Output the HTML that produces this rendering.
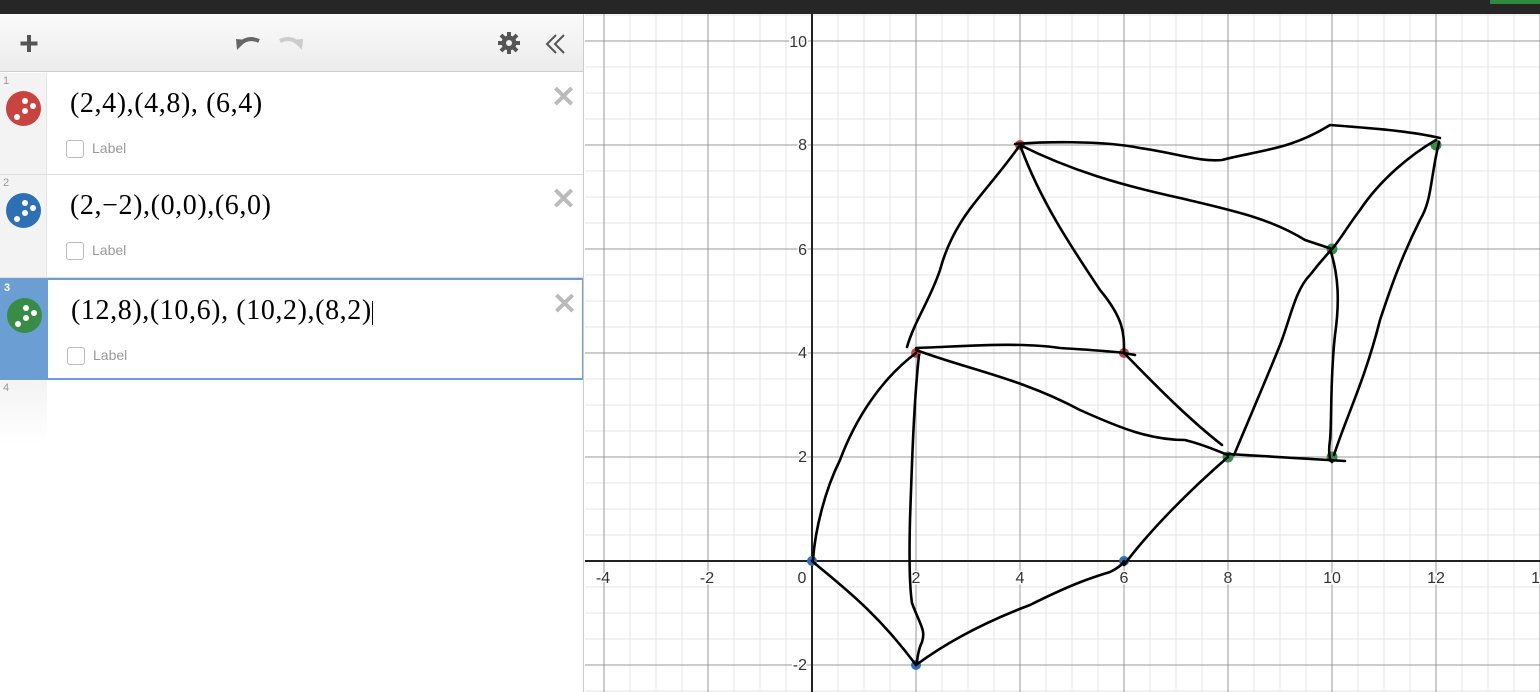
<!DOCTYPE html>
<html><head><meta charset="utf-8"><style>
*{margin:0;padding:0;box-sizing:border-box}
body{width:1540px;height:692px;overflow:hidden;background:#fff;font-family:"Liberation Sans",sans-serif;position:relative}
.top{position:absolute;left:0;top:0;width:1540px;height:14px;background:#262626}
.panel{position:absolute;left:0;top:14px;width:584px;height:678px;background:#fff;border-right:1px solid #ccc}
.tool{position:absolute;left:0;top:0;width:583px;height:58px;background:linear-gradient(#fafafa,#ececec);border-bottom:1px solid #ccc}
.row{position:absolute;left:0;width:583px;border-bottom:1px solid #ddd;background:#fff}
.gut{position:absolute;left:0;top:0;width:47px;height:100%;background:#f3f3f3;border-right:1px solid #e4e4e4}
.num{position:absolute;left:3px;top:2px;font-size:11px;color:#999}
.dot{position:absolute;left:6px;top:18px;width:35px;height:35px;border-radius:50%}
.dot i{position:absolute;width:6px;height:6px;border-radius:50%;background:#fff}
.math{position:absolute;left:70px;top:15px;font-family:"Liberation Serif",serif;font-size:28px;letter-spacing:0.6px;color:#000;white-space:nowrap}
.lab{position:absolute;left:66px;top:67px;font-size:14px;color:#999}
.lab b{display:inline-block;width:18px;height:18px;border:1px solid #bbb;border-radius:3px;vertical-align:middle;margin-right:8px;font-weight:normal}
.x{position:absolute;left:551px;top:10px;font-size:30px;color:#bbb;font-weight:bold;line-height:1}
.graph{position:absolute;left:585px;top:14px}
</style></head><body>
<div class="top"></div>
<div style="position:absolute;left:1490px;top:0;width:50px;height:4px;background:#2e8b3e"></div>
<div class="panel">
 <div class="tool">
  <svg width="583" height="58" style="position:absolute;left:0;top:0">
   <path d="M29 21v17M20.5 29.5h17" stroke="#555" stroke-width="4"/>
   <path d="M237 36 L236 25 L247 26 Z" fill="#666"/><path d="M240 30 Q248 22 259 27" stroke="#666" stroke-width="4" fill="none"/>
   <path d="M302 36 L303 25 L292 26 Z" fill="#ccc"/><path d="M299 30 Q291 22 280 27" stroke="#ccc" stroke-width="4" fill="none"/>
   <g transform="translate(509,29)" fill="#555"><circle r="7.5"/><g stroke="#555" stroke-width="4"><path d="M0 -11V11M-11 0H11M-8 -8L8 8M-8 8L8 -8"/></g><circle r="3" fill="#f0f0f0"/></g>
   <path d="M556 21 L547 30 L556 39 M564 21 L555 30 L564 39" stroke="#555" stroke-width="2" fill="none"/>
  </svg>
 </div>
 <div class="row" style="top:59px;height:102px"><div class="gut"><span class="num">1</span><div class="dot" style="background:#c74440"><i style="left:16px;top:7px"></i><i style="left:24px;top:12px"></i><i style="left:16px;top:17px"></i><i style="left:8px;top:23px"></i></div></div><div class="math">(2,4),(4,8), (6,4)</div><div class="lab"><b></b>Label</div><div class="x">✕</div></div>
 <div class="row" style="top:161px;height:103px"><div class="gut"><span class="num">2</span><div class="dot" style="background:#2d70b3"><i style="left:16px;top:7px"></i><i style="left:24px;top:12px"></i><i style="left:16px;top:17px"></i><i style="left:8px;top:23px"></i></div></div><div class="math">(2,−2),(0,0),(6,0)</div><div class="lab"><b></b>Label</div><div class="x">✕</div></div>
 <div class="row" style="top:264px;height:102px;border:1px solid #6b9ed2;border-top:2px solid #6b9ed2;border-bottom:2px solid #6b9ed2"><div class="gut" style="background:#6b9ed2;border:none;width:47px"><span class="num" style="color:#fff;font-weight:bold">3</span><div class="dot" style="background:#388c46"><i style="left:16px;top:7px"></i><i style="left:24px;top:12px"></i><i style="left:16px;top:17px"></i><i style="left:8px;top:23px"></i></div></div><div class="math">(12,8),(10,6), (10,2),(8,2)<span style="display:inline-block;width:1px;height:24px;background:#000;vertical-align:middle"></span></div><div class="lab"><b></b>Label</div><div class="x">✕</div></div>
 <div style="position:absolute;left:0;top:366px;width:47px;height:64px;background:linear-gradient(#f3f3f3,#fff)"><span class="num">4</span></div>
</div>
<svg class="graph" width="955" height="678" viewBox="585 14 955 678">
 <g id="minor" stroke="#e6e6e6" stroke-width="1"></g>
 <g id="major" stroke="#999" stroke-width="1"></g>
 <path d="M812 14V692M585 561H1540" stroke="#222" stroke-width="2"/>
 <g font-size="16" fill="#333" font-family="Liberation Sans,sans-serif" stroke="#fff" stroke-width="3" paint-order="stroke">
  <text x="603" y="583" text-anchor="middle">-4</text><text x="707" y="583" text-anchor="middle">-2</text><text x="802" y="583" text-anchor="middle">0</text>
  <text x="916" y="583" text-anchor="middle">2</text><text x="1020" y="583" text-anchor="middle">4</text><text x="1124" y="583" text-anchor="middle">6</text>
  <text x="1228" y="583" text-anchor="middle">8</text><text x="1332" y="583" text-anchor="middle">10</text><text x="1436" y="583" text-anchor="middle">12</text><text x="1540" y="583" text-anchor="middle">14</text>
  <text x="807" y="47" text-anchor="end">10</text><text x="807" y="150" text-anchor="end">8</text><text x="807" y="255" text-anchor="end">6</text>
  <text x="807" y="358" text-anchor="end">4</text><text x="807" y="462" text-anchor="end">2</text><text x="807" y="670" text-anchor="end">-2</text>
 </g>
 <g fill="#c74440"><circle cx="916" cy="353" r="5"/><circle cx="1020" cy="145" r="5"/><circle cx="1124" cy="353" r="5"/></g>
 <g fill="#2d70b3"><circle cx="916" cy="665" r="5"/><circle cx="812" cy="561" r="5"/><circle cx="1124" cy="561" r="5"/></g>
 <g fill="#388c46"><circle cx="1436" cy="145" r="5.5"/><circle cx="1332" cy="249" r="5.5"/><circle cx="1332" cy="457" r="5.5"/><circle cx="1228" cy="457" r="5.5"/></g>
 <g stroke="#000" stroke-width="2.6" fill="none" stroke-linejoin="round" stroke-linecap="round">
  <path d="M907 347 C915 320 930 300 940 270 C955 215 985 195 1020 145"/>
  <path d="M1015 144 C1040 142 1100 140 1140 148 C1180 154 1200 162 1222 160 C1260 150 1290 150 1330 125 C1370 128 1410 131 1440 138"/>
  <path d="M1020 145 C1070 170 1120 185 1180 198 C1230 210 1270 218 1305 240 L1332 249"/>
  <path d="M1020 145 C1040 200 1070 245 1100 290 C1125 320 1124 335 1124 353 L1135 355"/>
  <path d="M916 348 C970 346 1020 342 1060 348 C1090 350 1110 351 1124 353"/>
  <path d="M916 350 C970 370 1020 378 1080 410 C1120 428 1150 440 1185 440 C1205 445 1215 450 1228 455"/>
  <path d="M1124 353 C1160 390 1190 420 1222 445"/>
  <path d="M1234 455 C1255 405 1270 370 1280 345 C1290 320 1295 290 1310 275 C1320 262 1332 249 1332 249"/>
  <path d="M1228 454 L1345 461"/>
  <path d="M1331 252 C1338 275 1340 300 1335 335 C1330 380 1332 420 1330 440 C1328 455 1330 460 1332 462"/>
  <path d="M1436 140 C1410 155 1380 180 1360 210 C1345 230 1340 240 1332 249"/>
  <path d="M1439 142 C1430 180 1432 200 1420 220 C1400 260 1390 290 1380 320 C1365 380 1345 420 1334 455"/>
  <path d="M916 353 C880 380 855 420 840 460 C825 490 815 530 813 560"/>
  <path d="M919 355 C914 400 912 460 910 520 C909 560 910 590 912 603 C920 625 926 630 922 642 C917 652 918 660 916 665"/>
  <path d="M812 561 C840 585 875 610 916 665"/>
  <path d="M916 665 C950 640 990 620 1030 605 C1070 585 1090 578 1110 572 C1118 568 1122 565 1124 561"/>
  <path d="M1124 565 C1150 530 1190 490 1228 457"/>
 </g>
</svg>
<script>
var mi=document.getElementById('minor'),ma=document.getElementById('major'),s='',t='';
for(var x=812-26*9;x<=1540;x+=26){var k=Math.round((x-812)/26);var l='<path d="M'+x+' 14V692"/>';if(k%4==0)t+=l;else s+=l;}
for(var y=561-26*21;y<=692;y+=26){var k=Math.round((y-561)/26);var l='<path d="M585 '+y+'H1540"/>';if(k%4==0)t+=l;else s+=l;}
mi.innerHTML=s;ma.innerHTML=t;
</script>
</body></html>
